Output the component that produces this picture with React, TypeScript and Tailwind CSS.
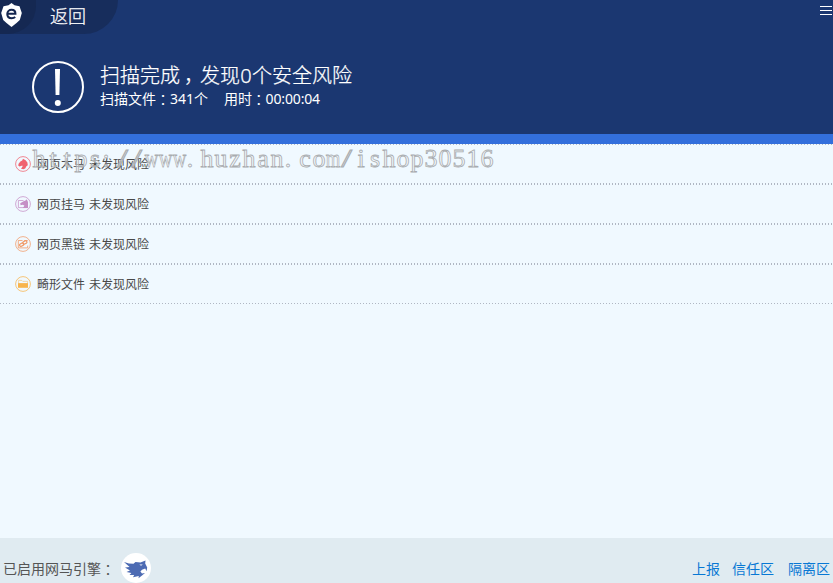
import type { ReactNode } from 'react';

const WATERMARK = 'https://www.huzhan.com/ishop30516';

function RowIcon({ color, children }: { color: string; children: ReactNode }) {
  return (
    <svg className="mr-[6px] h-4 w-4 shrink-0" viewBox="0 0 16 16" fill="none" style={{ color }}>
      <circle cx="8" cy="8" r="7.4" stroke="currentColor" strokeWidth="1" opacity="0.75" />
      {children}
    </svg>
  );
}

function Colon() {
  return <span className="relative top-px inline-block font-['Noto_Sans_CJK_TC',sans-serif] leading-none">：</span>;
}

function Dots() {
  return <div className="h-px bg-[repeating-linear-gradient(90deg,#b0b7c3_0_1px,transparent_1px_3px)]" />;
}

const rows = [
  {
    name: '网页木马',
    color: '#f0626f',
    icon: <path fill="currentColor" d="M8 2.8 10.6 4.2 12.4 6.6 12.8 9.2 11.4 10.2 10.2 12.6 8.4 13.2 6 12.8 7.6 10.6 7.3 9.4 4.6 10.4 3.2 9.4 3.6 7.8 5.4 5.4 7.2 4.4z" />,
  },
  {
    name: '网页挂马',
    color: '#c58fc5',
    icon: (
      <>
        <path stroke="currentColor" strokeWidth="1" d="M8.5 4.5H3.4v7.1h9.2" opacity="0.75" />
        <path fill="currentColor" d="M5.2 7.2 8.6 5.2 10.6 4.6 11.2 3.2 12.2 4.2 13 6v6H8l1.4-2.6-1.8-.6-2 .5z" />
      </>
    ),
  },
  {
    name: '网页黑链',
    color: '#f19a67',
    icon: (
      <>
        <path stroke="currentColor" strokeWidth="1" d="M7.5 4.5H3.3v7.4h9.4V9.6M9.2 4.5h3.5" opacity="0.8" />
        <rect x="4.5" y="7.4" width="4.3" height="2.6" rx="1.2" transform="rotate(-28 6.6 8.7)" stroke="currentColor" strokeWidth="1.2" />
        <rect x="7.7" y="5.2" width="4.3" height="2.6" rx="1.2" transform="rotate(-28 9.8 6.5)" stroke="currentColor" strokeWidth="1.2" />
      </>
    ),
  },
  {
    name: '畸形文件',
    color: '#f8b44c',
    icon: (
      <>
        <path stroke="currentColor" strokeWidth="0.8" d="M3.6 7V4.4h3.2l1 1h4.7V7" opacity="0.6" />
        <path fill="currentColor" d="M3 7.1h10v4.7H3z" />
      </>
    ),
  },
];

function Header() {
  return (
    <header className="h-36 border-b-[10px] border-[#336fdc] bg-[#1b3771] text-white">
      <div className="flex h-[34px] items-start justify-between">
        <div className="flex h-[34px] w-[118px] items-start rounded-br-[36px] bg-[#172d5c]">
          <div className="h-[34px] w-9 rounded-br-[28px] bg-[#152852]">
            <svg className="mt-[3px] ml-px h-6 w-[21px]" viewBox="0 0 21 24">
              <path fill="#fff" d="M10.5 0 13.5 2.2 18.5 3.2 20.8 10 18.8 17 15.5 20 10.5 24 5.5 20 2.2 17 .2 10 2.5 3.2 7.5 2.2z" />
              <path fill="none" stroke="#14264f" strokeWidth="2.1" d="M6.8 10.8h7.6c0-2.4-1.4-4-3.8-4s-4.3 1.7-4.3 4.2 1.7 4.2 4.4 4.2c1.4 0 2.6-.4 3.5-1.2" />
            </svg>
          </div>
          <button className="ml-[14px] h-8 text-[18px] leading-[30px] font-light [-webkit-text-stroke:0.25px_#fff]">返回</button>
        </div>
        <div className="mt-[6px] mr-px flex w-3 flex-col gap-[3px]">
          <i className="h-px bg-white" />
          <i className="h-px bg-white" />
          <i className="h-px bg-white" />
        </div>
      </div>
      <div className="flex pt-[27px] pl-8">
        <svg className="h-[52px] w-[52px]" viewBox="0 0 52 52">
          <circle cx="26" cy="26" r="25" fill="none" stroke="#fff" strokeWidth="2" />
          <path fill="#fff" d="M23 8h5l-.6 26h-3.8z" />
          <circle cx="25.8" cy="42" r="3" fill="#fff" />
        </svg>
        <div className="ml-4">
          <h1 className="h-[26px] text-[20px] leading-[29px] font-light [-webkit-text-stroke:0.25px_#fff]">
            扫描完成<span className="relative left-[4px]">，</span>发现<span className="inline-block w-3 text-center">0</span>个安全风险
          </h1>
          <p className="flex h-6 gap-4 text-sm leading-[23px]">
            <span>扫描文件<Colon />341个</span>
            <span className="tracking-[-0.15px]">用时<Colon />00:00:04</span>
          </p>
        </div>
      </div>
    </header>
  );
}

export default function App() {
  return (
    <div className="relative flex h-[583px] w-[833px] flex-col overflow-hidden bg-[#f0f9ff] font-['Noto_Sans','Noto_Sans_CJK_SC',sans-serif] whitespace-nowrap">
      <Header />
      <main className="flex-1">
        {rows.map((row) => (
          <div key={row.name}>
            <Dots />
            <div className="flex h-[38px] items-center pl-[15px] text-[12px] text-[#484848]">
              <RowIcon color={row.color}>{row.icon}</RowIcon>
              <span className="pt-[2px] leading-4">{row.name}</span>
              <span className="ml-1 pt-[2px] leading-4">未发现风险</span>
            </div>
            <Dots />
          </div>
        ))}
      </main>
      <footer className="flex h-[45px] items-start bg-[#e0ebf1] pt-[15px] pl-[3px] text-sm text-[#555]">
        <span className="h-8 leading-[31px]">已启用网马引擎<Colon /></span>
        <svg className="ml-[6px] h-[30px] w-[30px]" viewBox="0 0 30 30">
          <circle cx="15" cy="15" r="15" fill="#fff" />
          <path fill="#4d6bb3" d="M3 9 8 10.6 12.5 10.8 14.5 9 19.5 9.6 24.5 7.6 24.2 10.6 26.2 14.6 25.6 18.2 24.2 15.6 21 16.8 19.4 18.6 21 20.6 24 20 21 22.6 17.5 25.2 17.8 23 12 24.2 13.2 22 8.5 22 10.4 20 5.5 19 9 17.4 4 14.6 8.6 14z" />
          <path fill="#fff" d="m18.4 11.6 3.4-.1-1.8 1.2z" />
        </svg>
        <nav className="ml-auto flex h-8 pr-[3px] leading-8 text-[#0878d4]">
          <a>上报</a>
          <a className="ml-3">信任区</a>
          <a className="ml-[14px]">隔离区</a>
        </nav>
      </footer>
      <div className="pointer-events-none absolute top-[143px] left-8 flex h-8 font-['Liberation_Serif',serif] text-[26px] leading-8 text-[#f4f6f8]/50 [-webkit-text-stroke:0.8px_#a9acaf]">
        {WATERMARK.split('').map((char, i) => (
          <span key={i} className="flex w-[14px] justify-center">
            <span className={char === 'w' || char === 'm' ? 'scale-x-[0.72]' : char === '.' || char === ':' ? '-translate-x-[3px]' : char === '/' ? 'scale-x-150' : ''}>{char}</span>
          </span>
        ))}
      </div>
    </div>
  );
}
